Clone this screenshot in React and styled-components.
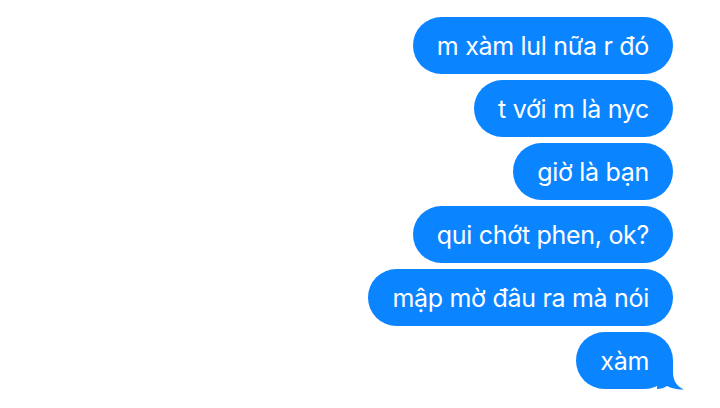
import styled, { createGlobalStyle } from "styled-components";

const GlobalStyle = createGlobalStyle`
  html, body {
    margin: 0;
    padding: 0;
    background: #fff;
  }
  body {
    font-family: Inter, "Noto Sans", "Liberation Sans", sans-serif;
  }
`;

const messages = [
  "m xàm lul nữa r đó",
  "t với m là nyc",
  "giờ là bạn",
  "qui chớt phen, ok?",
  "mập mờ đâu ra mà nói",
  "xàm",
];

const Thread = () => {
  return (
    <Wrapper>
      {messages.map((text, i) => (
        <Bubble key={i}>
          {text}
          {i === messages.length - 1 && (
            <Tail width="28" height="30" viewBox="0 0 28 30">
              <path
                d="M0 0 H16 V12 C16 21 20 26.5 27 29.5 C21 30 15 28.5 10 26 C7 28 4 29 0 29 Z"
                fill="#0a84ff"
              />
            </Tail>
          )}
        </Bubble>
      ))}
    </Wrapper>
  );
};

const Wrapper = styled.div`
  width: 720px;
  height: 408px;
  box-sizing: border-box;
  padding: 17px 47px 0 0;
  display: flex;
  flex-direction: column;
  align-items: flex-end;
  gap: 6px;
`;

const Bubble = styled.div`
  position: relative;
  box-sizing: border-box;
  height: 57px;
  padding: 0 24px;
  display: flex;
  align-items: center;
  background: #0a84ff;
  color: #fff;
  font-size: 25px;
  letter-spacing: -0.3px;
  border-radius: 29px;
  white-space: nowrap;
`;

const Tail = styled.svg`
  position: absolute;
  right: -12px;
  bottom: -1px;
`;

export default function App() {
  return (
    <>
      <GlobalStyle />
      <Thread />
    </>
  );
}
